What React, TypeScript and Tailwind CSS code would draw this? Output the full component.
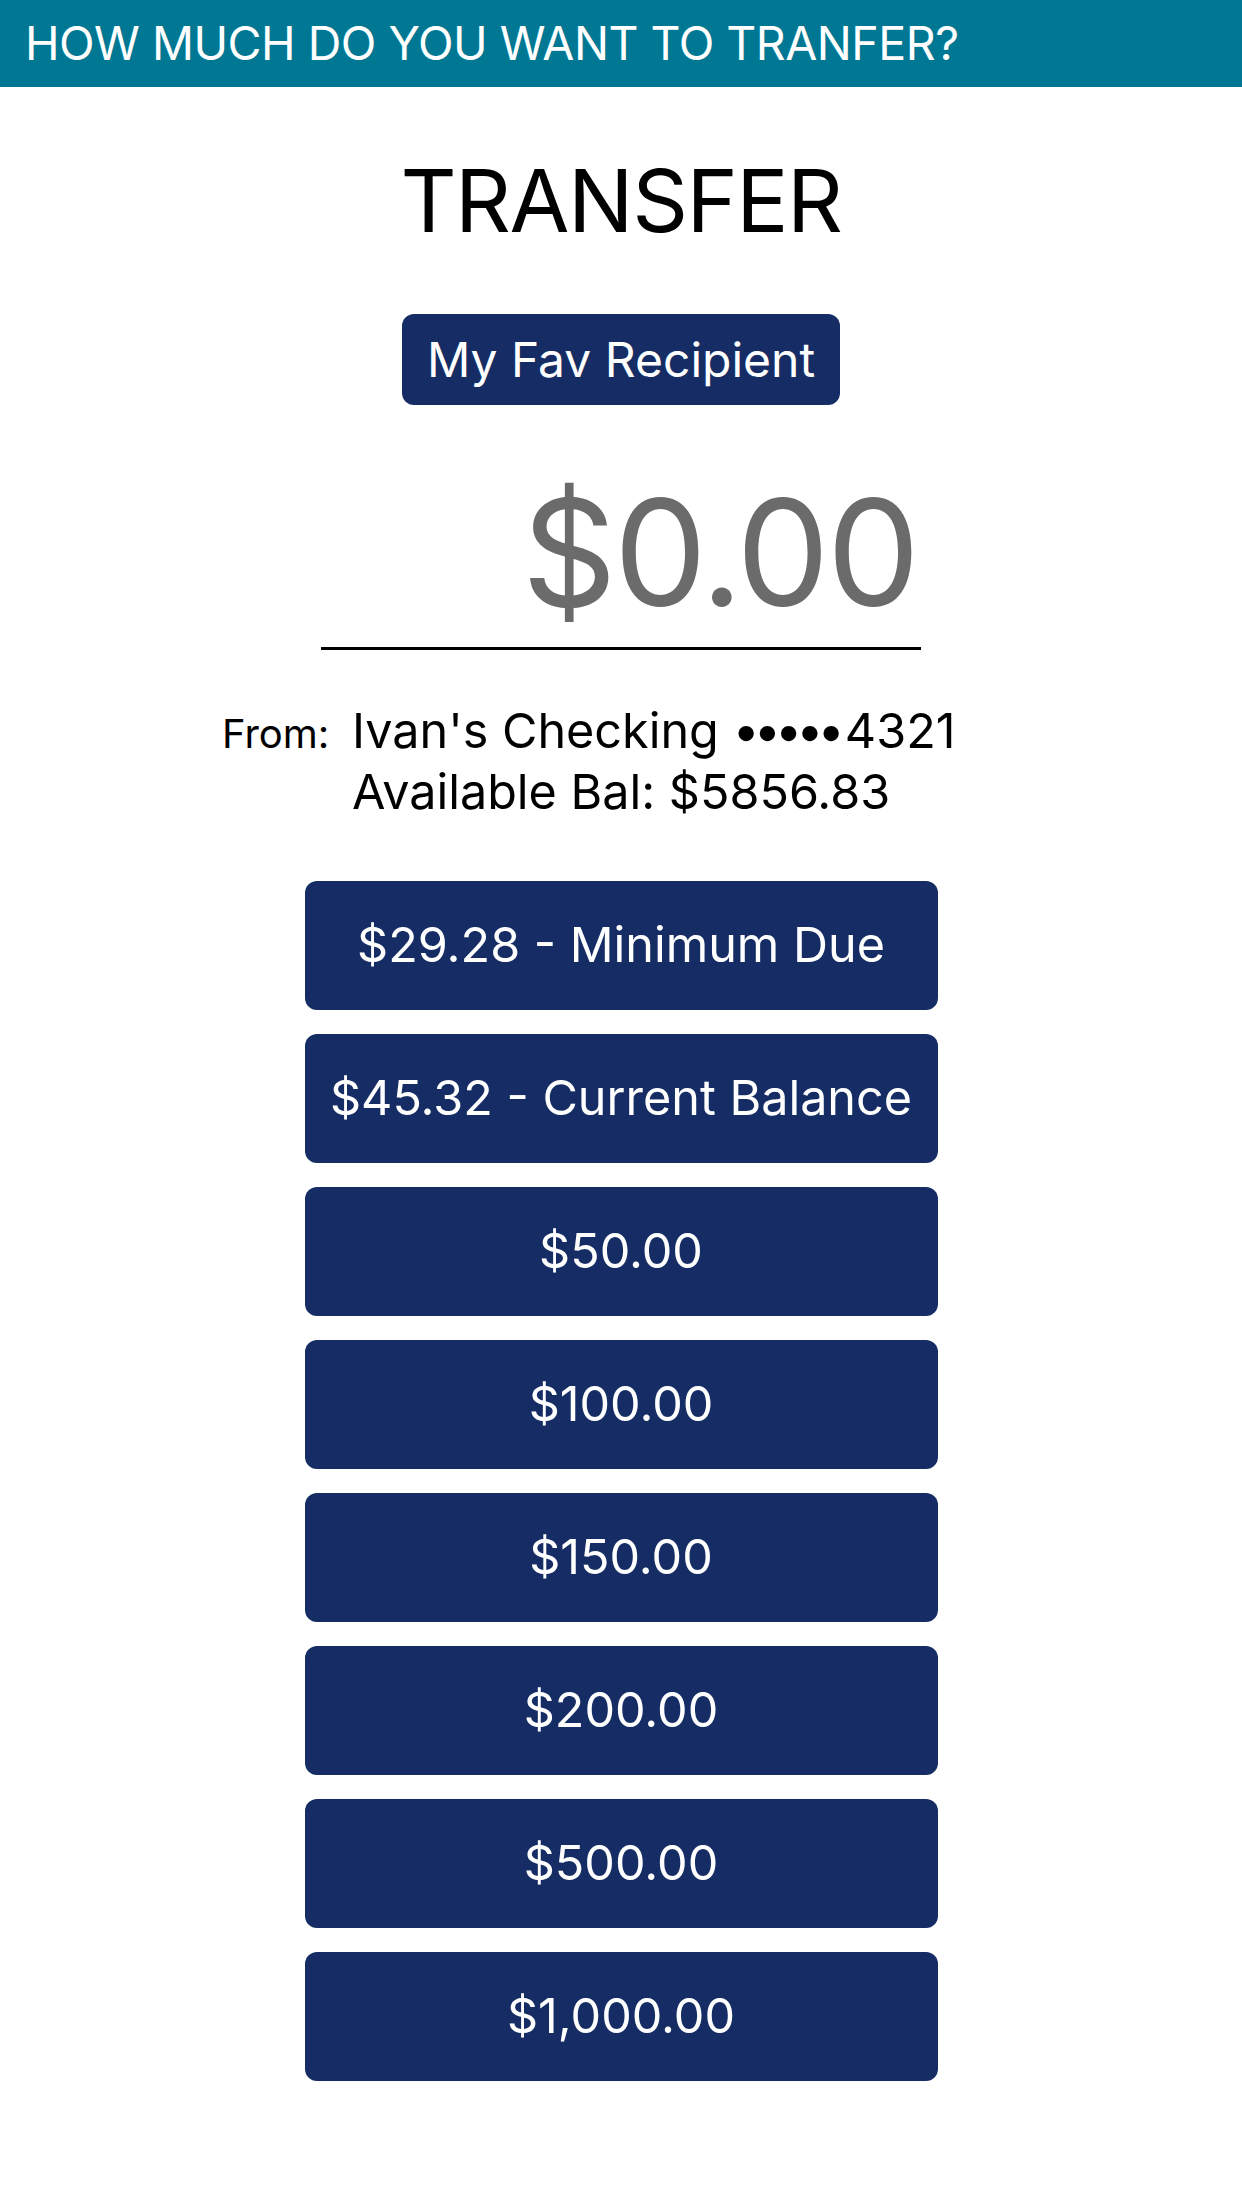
import React from 'react'

const amounts = [
  "$29.28 - Minimum Due",
  "$45.32 - Current Balance",
  "$50.00",
  "$100.00",
  "$150.00",
  "$200.00",
  "$500.00",
  "$1,000.00",
]

export default function App() {
  return (
    <div className="w-[1242px] min-h-[2208px] bg-white font-['Inter','Noto_Sans',sans-serif]">
      {/* Top bar */}
      <div className="h-[87px] bg-[#007894] flex items-center pl-[25px]">
        <span className="text-white text-[46.5px] leading-none tracking-[-0.5px]">HOW MUCH DO YOU WANT TO TRANFER?</span>
      </div>

      <div className="flex flex-col items-center">
        <h1 className="mt-[70px] text-[87px] leading-none text-black tracking-[-1.5px]">TRANSFER</h1>

        <button className="mt-[70px] h-[91px] px-[25px] rounded-[12px] bg-[#152d64] text-white text-[48px] leading-none">
          My Fav Recipient
        </button>

        {/* Amount input */}
        <div className="mt-[74px] w-[600px] border-b-[3px] border-black flex justify-end pb-[20px]">
          <span className="text-[148px] leading-none text-[#6b6b6b] tracking-[-3px] mr-[4px]">$0.00</span>
        </div>
      </div>

      {/* From account */}
      <div className="mt-[50px] flex pl-[222px] items-baseline">
        <span className="text-[40px] text-black w-[130px]">From:</span>
        <div className="flex flex-col text-[48.5px] leading-[61px] text-black">
          <span>
            Ivan's Checking <span className="tracking-[-6px]">•••••</span><span className="ml-[6px]">4321</span>
          </span>
          <span>Available Bal: $5856.83</span>
        </div>
      </div>

      {/* Preset amounts */}
      <div className="mt-[59px] flex flex-col items-center gap-[24px] pb-[125px]">
        {amounts.map((a) => (
          <button
            key={a}
            className="w-[633px] h-[129px] rounded-[12px] bg-[#152d64] text-white text-[48.5px] leading-none flex items-center justify-center"
          >
            {a}
          </button>
        ))}
      </div>
    </div>
  )
}
